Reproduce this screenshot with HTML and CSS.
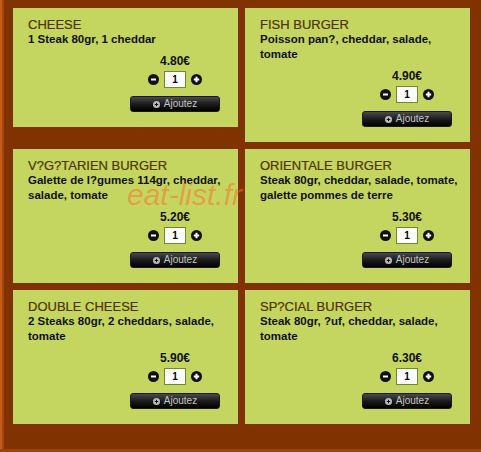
FILE: index.html
```html
<!DOCTYPE html>
<html lang="fr">
<head>
<meta charset="utf-8">
<title>Menu burgers</title>
<link rel="stylesheet" href="styles.css">
</head>
<body>
<div class="page">
  <div class="grid">
    <div class="card">
      <h2 class="title">CHEESE</h2>
      <p class="desc">1 Steak 80gr, 1 cheddar</p>
      <div class="buy">
        <div class="price">4.80€</div>
        <div class="qty">
          <span class="round"><svg viewBox="0 0 11 11" width="11" height="11"><circle cx="5.5" cy="5.5" r="5.5" fill="#111"/><path d="M3 5.5H8" stroke="#fff" stroke-width="2"/></svg></span>
          <span class="box">1</span>
          <span class="round"><svg viewBox="0 0 11 11" width="11" height="11"><circle cx="5.5" cy="5.5" r="5.5" fill="#111"/><path d="M2.8 5.5H8.2M5.5 2.8V8.2" stroke="#fff" stroke-width="2"/></svg></span>
        </div>
        <div class="add"><svg class="add-ico" viewBox="0 0 7 7" width="7" height="7"><circle cx="3.5" cy="3.5" r="3.5" fill="#bbb"/><path d="M1.8 3.5H5.2M3.5 1.8V5.2" stroke="#111" stroke-width="1"/></svg>Ajoutez</div>
      </div>
    </div>
    <div class="card">
      <h2 class="title">FISH BURGER</h2>
      <p class="desc">Poisson pan?, cheddar, salade, tomate</p>
      <div class="buy">
        <div class="price">4.90€</div>
        <div class="qty">
          <span class="round"><svg viewBox="0 0 11 11" width="11" height="11"><circle cx="5.5" cy="5.5" r="5.5" fill="#111"/><path d="M3 5.5H8" stroke="#fff" stroke-width="2"/></svg></span>
          <span class="box">1</span>
          <span class="round"><svg viewBox="0 0 11 11" width="11" height="11"><circle cx="5.5" cy="5.5" r="5.5" fill="#111"/><path d="M2.8 5.5H8.2M5.5 2.8V8.2" stroke="#fff" stroke-width="2"/></svg></span>
        </div>
        <div class="add"><svg class="add-ico" viewBox="0 0 7 7" width="7" height="7"><circle cx="3.5" cy="3.5" r="3.5" fill="#bbb"/><path d="M1.8 3.5H5.2M3.5 1.8V5.2" stroke="#111" stroke-width="1"/></svg>Ajoutez</div>
      </div>
    </div>
    <div class="card">
      <h2 class="title">V?G?TARIEN BURGER</h2>
      <p class="desc">Galette de l?gumes 114gr, cheddar, salade, tomate</p>
      <div class="buy">
        <div class="price">5.20€</div>
        <div class="qty">
          <span class="round"><svg viewBox="0 0 11 11" width="11" height="11"><circle cx="5.5" cy="5.5" r="5.5" fill="#111"/><path d="M3 5.5H8" stroke="#fff" stroke-width="2"/></svg></span>
          <span class="box">1</span>
          <span class="round"><svg viewBox="0 0 11 11" width="11" height="11"><circle cx="5.5" cy="5.5" r="5.5" fill="#111"/><path d="M2.8 5.5H8.2M5.5 2.8V8.2" stroke="#fff" stroke-width="2"/></svg></span>
        </div>
        <div class="add"><svg class="add-ico" viewBox="0 0 7 7" width="7" height="7"><circle cx="3.5" cy="3.5" r="3.5" fill="#bbb"/><path d="M1.8 3.5H5.2M3.5 1.8V5.2" stroke="#111" stroke-width="1"/></svg>Ajoutez</div>
      </div>
    </div>
    <div class="card">
      <h2 class="title">ORIENTALE BURGER</h2>
      <p class="desc">Steak 80gr, cheddar, salade, tomate, galette pommes de terre</p>
      <div class="buy">
        <div class="price">5.30€</div>
        <div class="qty">
          <span class="round"><svg viewBox="0 0 11 11" width="11" height="11"><circle cx="5.5" cy="5.5" r="5.5" fill="#111"/><path d="M3 5.5H8" stroke="#fff" stroke-width="2"/></svg></span>
          <span class="box">1</span>
          <span class="round"><svg viewBox="0 0 11 11" width="11" height="11"><circle cx="5.5" cy="5.5" r="5.5" fill="#111"/><path d="M2.8 5.5H8.2M5.5 2.8V8.2" stroke="#fff" stroke-width="2"/></svg></span>
        </div>
        <div class="add"><svg class="add-ico" viewBox="0 0 7 7" width="7" height="7"><circle cx="3.5" cy="3.5" r="3.5" fill="#bbb"/><path d="M1.8 3.5H5.2M3.5 1.8V5.2" stroke="#111" stroke-width="1"/></svg>Ajoutez</div>
      </div>
    </div>
    <div class="card">
      <h2 class="title">DOUBLE CHEESE</h2>
      <p class="desc">2 Steaks 80gr, 2 cheddars, salade, tomate</p>
      <div class="buy">
        <div class="price">5.90€</div>
        <div class="qty">
          <span class="round"><svg viewBox="0 0 11 11" width="11" height="11"><circle cx="5.5" cy="5.5" r="5.5" fill="#111"/><path d="M3 5.5H8" stroke="#fff" stroke-width="2"/></svg></span>
          <span class="box">1</span>
          <span class="round"><svg viewBox="0 0 11 11" width="11" height="11"><circle cx="5.5" cy="5.5" r="5.5" fill="#111"/><path d="M2.8 5.5H8.2M5.5 2.8V8.2" stroke="#fff" stroke-width="2"/></svg></span>
        </div>
        <div class="add"><svg class="add-ico" viewBox="0 0 7 7" width="7" height="7"><circle cx="3.5" cy="3.5" r="3.5" fill="#bbb"/><path d="M1.8 3.5H5.2M3.5 1.8V5.2" stroke="#111" stroke-width="1"/></svg>Ajoutez</div>
      </div>
    </div>
    <div class="card">
      <h2 class="title">SP?CIAL BURGER</h2>
      <p class="desc">Steak 80gr, ?uf, cheddar, salade, tomate</p>
      <div class="buy">
        <div class="price">6.30€</div>
        <div class="qty">
          <span class="round"><svg viewBox="0 0 11 11" width="11" height="11"><circle cx="5.5" cy="5.5" r="5.5" fill="#111"/><path d="M3 5.5H8" stroke="#fff" stroke-width="2"/></svg></span>
          <span class="box">1</span>
          <span class="round"><svg viewBox="0 0 11 11" width="11" height="11"><circle cx="5.5" cy="5.5" r="5.5" fill="#111"/><path d="M2.8 5.5H8.2M5.5 2.8V8.2" stroke="#fff" stroke-width="2"/></svg></span>
        </div>
        <div class="add"><svg class="add-ico" viewBox="0 0 7 7" width="7" height="7"><circle cx="3.5" cy="3.5" r="3.5" fill="#bbb"/><path d="M1.8 3.5H5.2M3.5 1.8V5.2" stroke="#111" stroke-width="1"/></svg>Ajoutez</div>
      </div>
    </div>
  </div>
  <div class="watermark">eat-list.fr</div>
</div>
</body>
</html>
```
FILE: styles.css
```css
html, body {
  margin: 0;
  padding: 0;
}
body {
  width: 481px;
  height: 452px;
  overflow: hidden;
  background: #803200;
  font-family: "Liberation Sans", Arial, sans-serif;
}
.page {
  position: relative;
  height: 452px;
  box-sizing: border-box;
  padding: 8px 0 0 13px;
  background:
    linear-gradient(0deg, #9c420c 0, #9c420c 3px, transparent 3px),
    linear-gradient(90deg, #c65c18 0, #c65c18 2px, #a3460c 2px, #a3460c 4px, #803200 4px);
}
.grid {
  display: grid;
  grid-template-columns: 225px 225px;
  column-gap: 7px;
  row-gap: 7px;
  align-items: start;
}
.card {
  background: #c4d660;
  padding: 9px 5px 15px 15px;
  display: flex;
  flex-direction: column;
}
.title {
  margin: 0;
  font-size: 13px;
  line-height: 15px;
  font-weight: normal;
  color: #523300;
  -webkit-text-stroke: 0.2px #523300;
}
.desc {
  margin: 0;
  font-size: 11.5px;
  line-height: 15px;
  font-weight: bold;
  color: #111;
}
.buy {
  width: 90px;
  margin: 7px 13px 0 auto;
  display: flex;
  flex-direction: column;
  align-items: center;
}
.price {
  font-size: 12px;
  line-height: 15px;
  font-weight: bold;
  color: #111;
}
.qty {
  margin-top: 2px;
  height: 17px;
  display: flex;
  align-items: center;
  gap: 5px;
}
.round {
  display: flex;
  width: 11px;
  height: 11px;
}
.box {
  box-sizing: border-box;
  width: 22px;
  height: 17px;
  border: 1px solid #6f8a2a;
  background: #fff;
  font-size: 10px;
  font-weight: bold;
  line-height: 15px;
  text-align: center;
  color: #000;
}
.add {
  margin-top: 8px;
  box-sizing: border-box;
  width: 90px;
  height: 16px;
  border-radius: 3px;
  border: 1px solid #1a1a1a;
  background: linear-gradient(180deg, #4a4a4a 0%, #1c1c1c 50%, #000 100%);
  color: #c4c4c4;
  font-size: 10px;
  line-height: 14px;
  display: flex;
  align-items: center;
  justify-content: center;
  gap: 4px;
}
.add-ico {
  display: block;
}
.watermark {
  position: absolute;
  left: 127px;
  top: 180px;
  font-size: 30px;
  line-height: 30px;
  font-style: italic;
  color: rgba(250, 115, 45, 0.55);
  pointer-events: none;
}
```
